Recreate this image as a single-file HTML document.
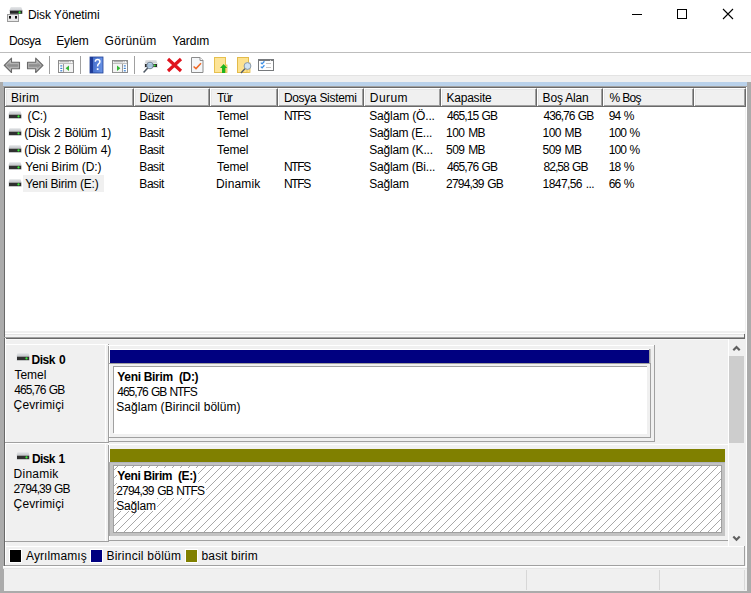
<!DOCTYPE html>
<html><head><meta charset="utf-8">
<style>
*{margin:0;padding:0;box-sizing:border-box}
html,body{width:751px;height:593px;overflow:hidden;background:#fff}
body{position:relative;font-family:"Liberation Sans",sans-serif;font-size:12px;color:#000}
.a{position:absolute}
.t{position:absolute;white-space:pre;line-height:14px;font-size:12px}
.b{font-weight:bold}
svg{position:absolute;display:block}
</style></head><body>
<svg style="left:6px;top:6px" width="18" height="18" viewBox="0 0 18 18">
  <defs><linearGradient id="tg" x1="0" y1="0" x2="0" y2="1"><stop offset="0" stop-color="#e6e8ea"/><stop offset="1" stop-color="#c4c7cb"/></linearGradient></defs>
  <path d="M4.8 1 L15.2 1 L16.8 5 L3.2 5 Z" fill="url(#tg)"/>
  <rect x="3.9" y="4.6" width="12.4" height="3.2" fill="#262626"/>
  <circle cx="13.6" cy="6.4" r="1.1" fill="#3cf03c"/>
  <rect x="1.5" y="8.5" width="11" height="7" fill="#e8e8e8" stroke="#9a9a9a"/>
  <rect x="3" y="10" width="2" height="2.6" fill="#111"/>
  <rect x="9" y="10" width="2" height="2.6" fill="#111"/>
</svg>
<div class="t" style="left:28.00px;top:7.84px;letter-spacing:-0.125px">Disk Yönetimi</div>
<div class="a" style="left:632px;top:14px;width:10px;height:1px;background:#000;"></div>
<div class="a" style="left:677px;top:9px;width:10px;height:10px;border:1px solid #000"></div>
<svg style="left:722px;top:8px" width="12" height="12" viewBox="0 0 12 12"><path d="M1 1 L11 11 M11 1 L1 11" stroke="#000" stroke-width="1.1"/></svg>
<div class="t" style="left:8.90px;top:33.84px;letter-spacing:-0.425px">Dosya</div>
<div class="t" style="left:56.30px;top:33.84px;letter-spacing:-0.200px">Eylem</div>
<div class="t" style="left:104.60px;top:33.84px;letter-spacing:0.267px">Görünüm</div>
<div class="t" style="left:172.40px;top:33.84px;letter-spacing:-0.180px">Yardım</div>
<div class="a" style="left:0px;top:52px;width:751px;height:1px;background:#bdbdbd;"></div>
<svg style="left:3px;top:57px" width="19" height="17" viewBox="0 0 19 17">
  <defs><linearGradient id="ag" x1="0" y1="0" x2="0" y2="1"><stop offset="0" stop-color="#cfcfcf"/><stop offset="0.5" stop-color="#8e8e8e"/><stop offset="1" stop-color="#c4c4c4"/></linearGradient></defs>
  <path d="M1.2 8.3 L8.5 1.2 L8.5 5.3 L16.5 5.3 L16.5 11.8 L8.5 11.8 L8.5 15.5 Z" fill="url(#ag)" stroke="#6a6a6a" stroke-width="1.1" stroke-linejoin="round"/>
  <path d="M3 8.3 L7.3 4.2 L7.3 6.4 L15.4 6.4 L15.4 10.7 L7.3 10.7 L7.3 12.5 Z" fill="none" stroke="#d8d8d8" stroke-width="0.6" stroke-opacity="0.7"/>
</svg>
<svg style="left:26px;top:57px" width="19" height="17" viewBox="0 0 19 17">
  <path d="M17 8.3 L9.7 1.2 L9.7 5.3 L1.5 5.3 L1.5 11.8 L9.7 11.8 L9.7 15.5 Z" fill="url(#ag)" stroke="#6a6a6a" stroke-width="1.1" stroke-linejoin="round"/>
  <path d="M15.2 8.3 L10.9 4.2 L10.9 6.4 L2.6 6.4 L2.6 10.7 L10.9 10.7 L10.9 12.5 Z" fill="none" stroke="#d8d8d8" stroke-width="0.6" stroke-opacity="0.7"/>
</svg>
<div class="a" style="left:49px;top:56px;width:1px;height:18px;background:#a0a0a0"></div>
<svg style="left:57px;top:59px" width="18" height="15" viewBox="0 0 18 15">
  <rect x="1.5" y="1.5" width="15" height="12" fill="#fff" stroke="#8c8c8c"/>
  <rect x="2.5" y="2.2" width="10" height="1.1" fill="#9a9a9a"/>
  <rect x="13.2" y="2.2" width="1" height="1.1" fill="#9a9a9a"/><rect x="15" y="2.2" width="1" height="1.1" fill="#9a9a9a"/>
  <rect x="2" y="4.2" width="14" height="0.9" fill="#b0b0b0"/>
  <rect x="7" y="5.1" width="9" height="8" fill="#f3f3f3"/>
  <line x1="6.5" y1="5" x2="6.5" y2="13" stroke="#9a9a9a"/>
  <rect x="3.3" y="6.3" width="2" height="1.2" fill="#3b7fd0"/><rect x="3.3" y="8.8" width="2" height="1.2" fill="#3b7fd0"/><rect x="3.3" y="11.2" width="2" height="1.2" fill="#3b7fd0"/>
  <path d="M12 6.6 L8.6 9.3 L12 12 Z" fill="#32b632"/>
</svg>
<div class="a" style="left:80px;top:56px;width:1px;height:18px;background:#a0a0a0"></div>
<svg style="left:89px;top:56px" width="15" height="18" viewBox="0 0 15 18">
  <defs><linearGradient id="hg" x1="0" y1="0" x2="1" y2="0"><stop offset="0" stop-color="#3d66c6"/><stop offset="1" stop-color="#6a94e6"/></linearGradient></defs>
  <rect x="1" y="1" width="13" height="16" fill="url(#hg)" stroke="#1f3f94" stroke-width="0.8"/>
  <rect x="1" y="1" width="3" height="16" fill="#1e3c98"/>
  <path d="M6.3 5.8 Q6.3 3.6 8.6 3.6 Q10.9 3.6 10.9 5.7 Q10.9 7 9.6 7.9 Q8.6 8.6 8.6 10.6" fill="none" stroke="#fff" stroke-width="1.5"/>
  <rect x="7.8" y="12.2" width="1.7" height="1.8" fill="#fff"/>
</svg>
<svg style="left:111px;top:59px" width="18" height="15" viewBox="0 0 18 15">
  <rect x="1.5" y="1.5" width="15" height="12" fill="#fff" stroke="#8c8c8c"/>
  <rect x="2.5" y="2.2" width="10" height="1.1" fill="#9a9a9a"/>
  <rect x="13.2" y="2.2" width="1" height="1.1" fill="#9a9a9a"/><rect x="15" y="2.2" width="1" height="1.1" fill="#9a9a9a"/>
  <rect x="2" y="4.2" width="14" height="0.9" fill="#b0b0b0"/>
  <rect x="2" y="5.1" width="9" height="8" fill="#f3f3f3"/>
  <line x1="11.5" y1="5" x2="11.5" y2="13" stroke="#9a9a9a"/>
  <rect x="12.8" y="6.3" width="2" height="1.2" fill="#3b7fd0"/><rect x="12.8" y="8.8" width="2" height="1.2" fill="#3b7fd0"/><rect x="12.8" y="11.2" width="2" height="1.2" fill="#3b7fd0"/>
  <path d="M6 6.6 L9.4 9.3 L6 12 Z" fill="#32b632"/>
</svg>
<div class="a" style="left:134px;top:56px;width:1px;height:18px;background:#a0a0a0"></div>
<svg style="left:142px;top:58px" width="18" height="17" viewBox="0 0 18 17">
  <path d="M3.6 2 L14.4 2 L15.2 6 L2.8 6 Z" fill="url(#dg)"/>
  <rect x="2" y="5" width="14" height="5" fill="#e6e8ea"/>
  <rect x="3" y="6" width="12" height="3" fill="#2c2c2c"/>
  <circle cx="12.6" cy="7.5" r="1.1" fill="#38ee38"/>
  <circle cx="8" cy="7.5" r="3.3" fill="#b4d2ec" fill-opacity="0.9" stroke="#6e7e8e" stroke-width="0.9"/>
  <line x1="5.7" y1="10" x2="1.6" y2="14.6" stroke="#4e5864" stroke-width="1.5"/>
</svg>
<svg style="left:166px;top:57px" width="17" height="16" viewBox="0 0 17 16">
  <path d="M2 2 L15 14 M15 2 L2 14" stroke="#e0141e" stroke-width="3.2"/>
</svg>
<svg style="left:190px;top:56px" width="15" height="18" viewBox="0 0 15 18">
  <path d="M1.5 1.5 L10 1.5 L13 4.5 L13 16.5 L1.5 16.5 Z" fill="#f4f6f8" stroke="#8c8c8c"/>
  <path d="M10 1.5 L10 4.5 L13 4.5" fill="#fff" stroke="#8c8c8c"/>
  <path d="M3.6 10.5 L6 12.6 L11 7.2" fill="none" stroke="#f06a28" stroke-width="1.5"/>
</svg>
<svg style="left:213px;top:56px" width="16" height="18" viewBox="0 0 16 18">
  <rect x="1.5" y="1.5" width="11" height="15" fill="#fde497" stroke="#e6c04e"/>
  <rect x="12.5" y="9" width="1.5" height="7.5" fill="#fde497" stroke="#e6c04e" stroke-width="0.8"/>
  <path d="M10.6 8 L14.2 12 L12.2 12 L12.2 17 L9 17 L9 12 L7 12 Z" fill="#1fb41f"/>
</svg>
<svg style="left:236px;top:56px" width="17" height="18" viewBox="0 0 17 18">
  <rect x="1.5" y="1.5" width="11" height="15" fill="#fde28e" stroke="#e3bb4a"/>
  <rect x="11" y="7" width="3" height="9.5" fill="#fde28e" stroke="#e3bb4a" stroke-width="0.8"/>
  <circle cx="11.5" cy="10" r="3.4" fill="#cfe3f3" stroke="#8a9aaa"/>
  <line x1="9" y1="12.6" x2="5" y2="17" stroke="#505a66" stroke-width="1.4"/>
</svg>
<svg style="left:257px;top:58px" width="18" height="14" viewBox="0 0 18 14">
  <rect x="1.5" y="1.5" width="15" height="11" fill="#fff" stroke="#777a7d"/>
  <rect x="1" y="1" width="16" height="2" fill="#777a7d"/>
  <rect x="13" y="2" width="1" height="1" fill="#d0d0d0"/>
  <path d="M3.8 4.6 L5.1 5.9 L7.4 3.3" fill="none" stroke="#3a8ee6" stroke-width="1.3"/>
  <path d="M3.8 8.6 L5.1 9.9 L7.4 7.3" fill="none" stroke="#3a8ee6" stroke-width="1.3"/>
  <rect x="9" y="5" width="5" height="1" fill="#c4c4c4"/><rect x="9" y="9" width="5" height="1" fill="#c4c4c4"/>
</svg>

<div class="a" style="left:0px;top:75px;width:751px;height:1px;background:#e3e3e3;"></div>
<div class="a" style="left:0px;top:76px;width:751px;height:517px;background:#f0f0f0;"></div>
<div class="a" style="left:0px;top:82px;width:4px;height:511px;background:#ababab;"></div>
<div class="a" style="left:747px;top:82px;width:4px;height:511px;background:#ababab;"></div>
<div class="a" style="left:0px;top:591px;width:751px;height:2px;background:#ababab;"></div>
<div class="a" style="left:3px;top:82px;width:744px;height:4px;background:#b9d1ea;"></div>
<div class="a" style="left:3px;top:86px;width:744px;height:1px;background:#a0a0a0;"></div>
<div class="a" style="left:4px;top:87px;width:742px;height:1px;background:#696969;"></div>
<div class="a" style="left:4px;top:87px;width:1px;height:479px;background:#696969;"></div>
<div class="a" style="left:5px;top:88px;width:740px;height:243px;background:#fff;"></div>
<div class="a" style="left:746px;top:87px;width:1px;height:480px;background:#fff;"></div>
<div class="a" style="left:5px;top:88px;width:129px;height:19px;background:#f0f0f0;border-left:1px solid #fff;border-top:1px solid #fff;border-right:1px solid #696969;border-bottom:1px solid #696969;box-shadow:inset -1px -1px 0 #a0a0a0,inset 1px 1px 0 #e6e6e6"></div>
<div class="t" style="left:10.90px;top:90.84px;letter-spacing:0.175px">Birim</div>
<div class="a" style="left:134px;top:88px;width:76px;height:19px;background:#f0f0f0;border-left:1px solid #fff;border-top:1px solid #fff;border-right:1px solid #696969;border-bottom:1px solid #696969;box-shadow:inset -1px -1px 0 #a0a0a0,inset 1px 1px 0 #e6e6e6"></div>
<div class="t" style="left:139.60px;top:90.84px;letter-spacing:-0.325px">Düzen</div>
<div class="a" style="left:210px;top:88px;width:68px;height:19px;background:#f0f0f0;border-left:1px solid #fff;border-top:1px solid #fff;border-right:1px solid #696969;border-bottom:1px solid #696969;box-shadow:inset -1px -1px 0 #a0a0a0,inset 1px 1px 0 #e6e6e6"></div>
<div class="t" style="left:217.00px;top:90.84px;letter-spacing:-1.100px">Tür</div>
<div class="a" style="left:278px;top:88px;width:86px;height:19px;background:#f0f0f0;border-left:1px solid #fff;border-top:1px solid #fff;border-right:1px solid #696969;border-bottom:1px solid #696969;box-shadow:inset -1px -1px 0 #a0a0a0,inset 1px 1px 0 #e6e6e6"></div>
<div class="t" style="left:283.90px;top:90.84px;letter-spacing:-0.308px">Dosya Sistemi</div>
<div class="a" style="left:364px;top:88px;width:77px;height:19px;background:#f0f0f0;border-left:1px solid #fff;border-top:1px solid #fff;border-right:1px solid #696969;border-bottom:1px solid #696969;box-shadow:inset -1px -1px 0 #a0a0a0,inset 1px 1px 0 #e6e6e6"></div>
<div class="t" style="left:369.80px;top:90.84px;letter-spacing:0.450px">Durum</div>
<div class="a" style="left:441px;top:88px;width:96px;height:19px;background:#f0f0f0;border-left:1px solid #fff;border-top:1px solid #fff;border-right:1px solid #696969;border-bottom:1px solid #696969;box-shadow:inset -1px -1px 0 #a0a0a0,inset 1px 1px 0 #e6e6e6"></div>
<div class="t" style="left:446.40px;top:90.84px;letter-spacing:-0.200px">Kapasite</div>
<div class="a" style="left:537px;top:88px;width:66px;height:19px;background:#f0f0f0;border-left:1px solid #fff;border-top:1px solid #fff;border-right:1px solid #696969;border-bottom:1px solid #696969;box-shadow:inset -1px -1px 0 #a0a0a0,inset 1px 1px 0 #e6e6e6"></div>
<div class="t" style="left:542.60px;top:90.84px;letter-spacing:-0.171px">Boş Alan</div>
<div class="a" style="left:603px;top:88px;width:91px;height:19px;background:#f0f0f0;border-left:1px solid #fff;border-top:1px solid #fff;border-right:1px solid #696969;border-bottom:1px solid #696969;box-shadow:inset -1px -1px 0 #a0a0a0,inset 1px 1px 0 #e6e6e6"></div>
<div class="t" style="left:609.60px;top:90.84px;letter-spacing:-0.700px">% Boş</div>
<div class="a" style="left:694px;top:88px;width:52px;height:19px;background:#f0f0f0;border-left:1px solid #fff;border-top:1px solid #fff;border-right:1px solid #696969;border-bottom:1px solid #696969;box-shadow:inset -1px -1px 0 #a0a0a0,inset 1px 1px 0 #e6e6e6"></div>
<div class="a" style="left:5px;top:106px;width:741px;height:1px;background:#696969;"></div>
<div class="a" style="left:23px;top:175px;width:81px;height:17px;background:#f0f0f0;"></div>
<svg style="left:7px;top:111px" width="16" height="10" viewBox="0 0 16 10"><defs><linearGradient id="dg" x1="0" y1="0" x2="0" y2="1"><stop offset="0" stop-color="#e2e4e6"/><stop offset="1" stop-color="#c2c5c9"/></linearGradient></defs><path d="M2.5 0.2 L13.5 0.2 L14.5 3.5 L1.5 3.5 Z" fill="url(#dg)"/><rect x="1" y="3.2" width="14" height="4.6" fill="#e8eaec"/><rect x="2" y="3.6" width="12.2" height="3.6" fill="#303030"/><circle cx="11.5" cy="5.4" r="1.1" fill="#38ee38"/></svg>
<div class="t" style="left:24.50px;top:108.84px;letter-spacing:-0.225px"> (C:)</div>
<div class="t" style="left:139.30px;top:108.84px;letter-spacing:-0.425px">Basit</div>
<div class="t" style="left:217.00px;top:108.84px;letter-spacing:-0.125px">Temel</div>
<div class="t" style="left:283.90px;top:108.84px;letter-spacing:-1.333px">NTFS</div>
<div class="t" style="left:369.20px;top:108.84px;letter-spacing:-0.145px">Sağlam (Ö...</div>
<div class="t" style="left:447.10px;top:108.84px;letter-spacing:-0.938px;word-spacing:1.0px">465,15 GB</div>
<div class="t" style="left:543.60px;top:108.84px;letter-spacing:-0.975px;word-spacing:1.0px">436,76 GB</div>
<div class="t" style="left:608.70px;top:108.84px;letter-spacing:-0.867px;word-spacing:1.0px">94 %</div>
<svg style="left:7px;top:128px" width="16" height="10" viewBox="0 0 16 10"><defs><linearGradient id="dg" x1="0" y1="0" x2="0" y2="1"><stop offset="0" stop-color="#e2e4e6"/><stop offset="1" stop-color="#c2c5c9"/></linearGradient></defs><path d="M2.5 0.2 L13.5 0.2 L14.5 3.5 L1.5 3.5 Z" fill="url(#dg)"/><rect x="1" y="3.2" width="14" height="4.6" fill="#e8eaec"/><rect x="2" y="3.6" width="12.2" height="3.6" fill="#303030"/><circle cx="11.5" cy="5.4" r="1.1" fill="#38ee38"/></svg>
<div class="t" style="left:24.30px;top:125.84px;letter-spacing:-0.320px;word-spacing:1.0px">(Disk 2 Bölüm 1)</div>
<div class="t" style="left:139.30px;top:125.84px;letter-spacing:-0.425px">Basit</div>
<div class="t" style="left:217.00px;top:125.84px;letter-spacing:-0.125px">Temel</div>
<div class="t" style="left:369.20px;top:125.84px;letter-spacing:-0.264px">Sağlam (E...</div>
<div class="t" style="left:446.10px;top:125.84px;letter-spacing:-0.580px;word-spacing:1.0px">100 MB</div>
<div class="t" style="left:542.60px;top:125.84px;letter-spacing:-0.600px;word-spacing:1.0px">100 MB</div>
<div class="t" style="left:608.70px;top:125.84px;letter-spacing:-0.875px;word-spacing:1.0px">100 %</div>
<svg style="left:7px;top:145px" width="16" height="10" viewBox="0 0 16 10"><defs><linearGradient id="dg" x1="0" y1="0" x2="0" y2="1"><stop offset="0" stop-color="#e2e4e6"/><stop offset="1" stop-color="#c2c5c9"/></linearGradient></defs><path d="M2.5 0.2 L13.5 0.2 L14.5 3.5 L1.5 3.5 Z" fill="url(#dg)"/><rect x="1" y="3.2" width="14" height="4.6" fill="#e8eaec"/><rect x="2" y="3.6" width="12.2" height="3.6" fill="#303030"/><circle cx="11.5" cy="5.4" r="1.1" fill="#38ee38"/></svg>
<div class="t" style="left:24.30px;top:142.84px;letter-spacing:-0.320px;word-spacing:1.0px">(Disk 2 Bölüm 4)</div>
<div class="t" style="left:139.30px;top:142.84px;letter-spacing:-0.425px">Basit</div>
<div class="t" style="left:217.00px;top:142.84px;letter-spacing:-0.125px">Temel</div>
<div class="t" style="left:369.20px;top:142.84px;letter-spacing:-0.200px">Sağlam (K...</div>
<div class="t" style="left:446.10px;top:142.84px;letter-spacing:-0.580px;word-spacing:1.0px">509 MB</div>
<div class="t" style="left:542.60px;top:142.84px;letter-spacing:-0.600px;word-spacing:1.0px">509 MB</div>
<div class="t" style="left:608.70px;top:142.84px;letter-spacing:-0.875px;word-spacing:1.0px">100 %</div>
<svg style="left:7px;top:162px" width="16" height="10" viewBox="0 0 16 10"><defs><linearGradient id="dg" x1="0" y1="0" x2="0" y2="1"><stop offset="0" stop-color="#e2e4e6"/><stop offset="1" stop-color="#c2c5c9"/></linearGradient></defs><path d="M2.5 0.2 L13.5 0.2 L14.5 3.5 L1.5 3.5 Z" fill="url(#dg)"/><rect x="1" y="3.2" width="14" height="4.6" fill="#e8eaec"/><rect x="2" y="3.6" width="12.2" height="3.6" fill="#303030"/><circle cx="11.5" cy="5.4" r="1.1" fill="#38ee38"/></svg>
<div class="t" style="left:25.30px;top:159.84px;letter-spacing:-0.043px">Yeni Birim (D:)</div>
<div class="t" style="left:139.30px;top:159.84px;letter-spacing:-0.425px">Basit</div>
<div class="t" style="left:217.00px;top:159.84px;letter-spacing:-0.125px">Temel</div>
<div class="t" style="left:283.90px;top:159.84px;letter-spacing:-1.333px">NTFS</div>
<div class="t" style="left:369.20px;top:159.84px;letter-spacing:-0.208px">Sağlam (Bi...</div>
<div class="t" style="left:447.10px;top:159.84px;letter-spacing:-0.938px;word-spacing:1.0px">465,76 GB</div>
<div class="t" style="left:543.60px;top:159.84px;letter-spacing:-0.986px;word-spacing:1.0px">82,58 GB</div>
<div class="t" style="left:608.70px;top:159.84px;letter-spacing:-0.867px;word-spacing:1.0px">18 %</div>
<svg style="left:7px;top:179px" width="16" height="10" viewBox="0 0 16 10"><defs><linearGradient id="dg" x1="0" y1="0" x2="0" y2="1"><stop offset="0" stop-color="#e2e4e6"/><stop offset="1" stop-color="#c2c5c9"/></linearGradient></defs><path d="M2.5 0.2 L13.5 0.2 L14.5 3.5 L1.5 3.5 Z" fill="url(#dg)"/><rect x="1" y="3.2" width="14" height="4.6" fill="#e8eaec"/><rect x="2" y="3.6" width="12.2" height="3.6" fill="#303030"/><circle cx="11.5" cy="5.4" r="1.1" fill="#38ee38"/></svg>
<div class="t" style="left:25.30px;top:176.84px;letter-spacing:-0.200px">Yeni Birim (E:)</div>
<div class="t" style="left:139.30px;top:176.84px;letter-spacing:-0.425px">Basit</div>
<div class="t" style="left:216.00px;top:176.84px;letter-spacing:0.167px">Dinamik</div>
<div class="t" style="left:283.90px;top:176.84px;letter-spacing:-1.333px">NTFS</div>
<div class="t" style="left:369.20px;top:176.84px;letter-spacing:-0.200px">Sağlam</div>
<div class="t" style="left:446.10px;top:176.84px;letter-spacing:-0.822px;word-spacing:1.0px">2794,39 GB</div>
<div class="t" style="left:542.60px;top:176.84px;letter-spacing:-0.580px;word-spacing:1.0px">1847,56 ...</div>
<div class="t" style="left:608.70px;top:176.84px;letter-spacing:-0.867px;word-spacing:1.0px">66 %</div>
<div class="a" style="left:5px;top:331px;width:741px;height:7px;background:#f0f0f0;"></div>
<div class="a" style="left:5px;top:333px;width:739px;height:1px;background:#fff;"></div>
<div class="a" style="left:5px;top:334px;width:739px;height:1px;background:#e3e3e3;"></div>
<div class="a" style="left:5px;top:335px;width:739px;height:2px;background:#f4f4f4;"></div>
<div class="a" style="left:4px;top:337px;width:741px;height:1px;background:#a0a0a0;"></div>
<div class="a" style="left:4px;top:338px;width:741px;height:1px;background:#696969;"></div>
<div class="a" style="left:5px;top:339px;width:740px;height:1px;background:#f8f8f8;"></div>
<div class="a" style="left:744px;top:334px;width:1px;height:4px;background:#696969;"></div>
<div class="a" style="left:5px;top:338px;width:1px;height:228px;background:#fff;"></div>
<div class="a" style="left:6px;top:344px;width:102px;height:1px;background:#fff;"></div>
<div class="a" style="left:105px;top:344px;width:1px;height:98px;background:#fff;"></div>
<div class="a" style="left:5px;top:442px;width:104px;height:1px;background:#a0a0a0;"></div>
<div class="a" style="left:108px;top:344px;width:1px;height:99px;background:#a0a0a0;"></div>
<div class="a" style="left:108px;top:345px;width:1px;height:1px;background:#fff;"></div>
<svg style="left:15px;top:353px" width="16" height="10" viewBox="0 0 16 10"><path d="M2.5 0.2 L13.5 0.2 L14.5 3.5 L1.5 3.5 Z" fill="url(#dg)"/><rect x="1" y="3.2" width="14" height="4.6" fill="#e8eaec"/><rect x="2" y="3.6" width="12.2" height="3.6" fill="#303030"/><circle cx="11.5" cy="5.4" r="1.1" fill="#38ee38"/></svg>
<div class="t b" style="left:31.40px;top:352.84px;letter-spacing:-0.400px;word-spacing:1.0px">Disk 0</div>
<div class="t" style="left:14.50px;top:367.84px;letter-spacing:-0.025px">Temel</div>
<div class="t" style="left:14.20px;top:382.84px;letter-spacing:-0.912px;word-spacing:1.0px">465,76 GB</div>
<div class="t" style="left:13.60px;top:397.84px;letter-spacing:0.125px">Çevrimiçi</div>
<div class="a" style="left:109px;top:345px;width:545px;height:1px;background:#fff;"></div>
<div class="a" style="left:109px;top:345px;width:1px;height:97px;background:#fff;"></div>
<div class="a" style="left:654px;top:345px;width:1px;height:97px;background:#a0a0a0;"></div>
<div class="a" style="left:109px;top:441px;width:546px;height:1px;background:#a0a0a0;"></div>
<div class="a" style="left:109px;top:349px;width:540px;height:1px;background:#fff;"></div>
<div class="a" style="left:110px;top:350px;width:539px;height:13px;background:#000080;"></div>
<div class="a" style="left:649px;top:349px;width:1px;height:15px;background:#a0a0a0;"></div>
<div class="a" style="left:650px;top:349px;width:1px;height:15px;background:#c8c8c8;"></div>
<div class="a" style="left:109px;top:363px;width:542px;height:1px;background:#a0a0a0;"></div>
<div class="a" style="left:113px;top:366px;width:534px;height:1px;background:#a0a0a0;"></div>
<div class="a" style="left:113px;top:366px;width:1px;height:67px;background:#a0a0a0;"></div>
<div class="a" style="left:650px;top:364px;width:1px;height:74px;background:#a0a0a0;"></div>
<div class="a" style="left:109px;top:437px;width:542px;height:1px;background:#a0a0a0;"></div>
<div class="a" style="left:114px;top:367px;width:533px;height:67px;background:#fff;"></div>
<div class="t b" style="left:117.30px;top:369.84px;letter-spacing:-0.313px">Yeni Birim  (D:)</div>
<div class="t" style="left:117.30px;top:384.84px;letter-spacing:-1.054px;word-spacing:1.0px">465,76 GB NTFS</div>
<div class="t" style="left:116.30px;top:399.84px;letter-spacing:0.041px">Sağlam (Birincil bölüm)</div>
<div class="a" style="left:6px;top:443px;width:102px;height:1px;background:#fff;"></div>
<div class="a" style="left:105px;top:443px;width:1px;height:98px;background:#fff;"></div>
<div class="a" style="left:5px;top:541px;width:104px;height:1px;background:#a0a0a0;"></div>
<div class="a" style="left:108px;top:443px;width:1px;height:99px;background:#a0a0a0;"></div>
<div class="a" style="left:108px;top:443px;width:1px;height:2px;background:#fff;"></div>
<svg style="left:15px;top:452px" width="16" height="10" viewBox="0 0 16 10"><path d="M2.5 0.2 L13.5 0.2 L14.5 3.5 L1.5 3.5 Z" fill="url(#dg)"/><rect x="1" y="3.2" width="14" height="4.6" fill="#e8eaec"/><rect x="2" y="3.6" width="12.2" height="3.6" fill="#303030"/><circle cx="11.5" cy="5.4" r="1.1" fill="#38ee38"/></svg>
<div class="t b" style="left:32.00px;top:451.84px;letter-spacing:-0.620px;word-spacing:1.0px">Disk 1</div>
<div class="t" style="left:13.60px;top:466.84px;letter-spacing:0.233px">Dinamik</div>
<div class="t" style="left:13.60px;top:481.84px;letter-spacing:-0.900px;word-spacing:1.0px">2794,39 GB</div>
<div class="t" style="left:13.60px;top:496.84px;letter-spacing:0.125px">Çevrimiçi</div>
<div class="a" style="left:109px;top:444px;width:619px;height:1px;background:#fff;"></div>
<div class="a" style="left:109px;top:444px;width:1px;height:97px;background:#fff;"></div>
<div class="a" style="left:728px;top:444px;width:1px;height:97px;background:#a0a0a0;"></div>
<div class="a" style="left:109px;top:540px;width:620px;height:1px;background:#a0a0a0;"></div>
<div class="a" style="left:110px;top:449px;width:615px;height:13px;background:#808000;"></div>
<div class="a" style="left:109px;top:462px;width:616px;height:74px;background:#c3c3c3;border-top:1px solid #b0b4bc;border-left:1px solid #a8a8a8"></div>
<div class="a" style="left:113px;top:465px;width:609px;height:68px;border:1px solid #a0a0a0;background:#fff"></div>
<svg style="left:114px;top:466px" width="607" height="66"><defs><pattern id="h" x="4" y="0" width="8" height="8" patternUnits="userSpaceOnUse"><rect x="0" y="7" width="1" height="1" fill="#a8a8a8"/><rect x="1" y="6" width="1" height="1" fill="#a8a8a8"/><rect x="2" y="5" width="1" height="1" fill="#a8a8a8"/><rect x="3" y="4" width="1" height="1" fill="#a8a8a8"/><rect x="4" y="3" width="1" height="1" fill="#a8a8a8"/><rect x="5" y="2" width="1" height="1" fill="#a8a8a8"/><rect x="6" y="1" width="1" height="1" fill="#a8a8a8"/><rect x="7" y="0" width="1" height="1" fill="#a8a8a8"/></pattern></defs><rect width="100%" height="100%" fill="url(#h)" shape-rendering="crispEdges"/></svg>
<div class="a" style="left:117px;top:468px;width:81px;height:15px;background:#fff;"></div>
<div class="t b" style="left:117.30px;top:468.84px;letter-spacing:-0.387px">Yeni Birim  (E:)</div>
<div class="a" style="left:117px;top:483px;width:89px;height:15px;background:#fff;"></div>
<div class="t" style="left:116.30px;top:483.84px;letter-spacing:-0.857px;word-spacing:1.0px">2794,39 GB NTFS</div>
<div class="a" style="left:117px;top:498px;width:40px;height:13px;background:#fff;"></div>
<div class="t" style="left:116.30px;top:498.84px;letter-spacing:-0.180px">Sağlam</div>
<div class="a" style="left:728px;top:339px;width:1px;height:207px;background:#fff;"></div>
<div class="a" style="left:729px;top:339px;width:16px;height:207px;background:#f0f0f0;"></div>
<div class="a" style="left:729px;top:356px;width:15px;height:87px;background:#cdcdcd;"></div>
<svg style="left:731px;top:343px" width="12" height="10" viewBox="0 0 12 10"><path d="M2.3 7.2 L5.5 4 L8.7 7.2" fill="none" stroke="#606060" stroke-width="2.2"/></svg>
<svg style="left:731px;top:533px" width="12" height="10" viewBox="0 0 12 10"><path d="M2.3 3.5 L5.5 6.7 L8.7 3.5" fill="none" stroke="#606060" stroke-width="2.2"/></svg>
<div class="a" style="left:5px;top:546px;width:740px;height:1px;background:#fff;"></div>
<div class="a" style="left:5px;top:565px;width:740px;height:1px;background:#a0a0a0;"></div>
<div class="a" style="left:744px;top:546px;width:1px;height:20px;background:#a0a0a0;"></div>
<div class="a" style="left:9px;top:549px;width:13px;height:14px;background:#fff;"></div>
<div class="a" style="left:10px;top:550px;width:11px;height:12px;background:#000;"></div>
<div class="a" style="left:90px;top:549px;width:13px;height:14px;background:#fff;"></div>
<div class="a" style="left:91px;top:550px;width:11px;height:12px;background:#000080;"></div>
<div class="a" style="left:185px;top:549px;width:13px;height:14px;background:#fff;"></div>
<div class="a" style="left:186px;top:550px;width:11px;height:12px;background:#808000;"></div>
<div class="t" style="left:26.00px;top:548.84px;letter-spacing:0.111px">Ayrılmamış</div>
<div class="t" style="left:106.40px;top:548.84px;letter-spacing:0.254px">Birincil bölüm</div>
<div class="t" style="left:201.50px;top:548.84px;letter-spacing:0.150px">basit birim</div>
<div class="a" style="left:3px;top:566px;width:744px;height:1px;background:#fff;"></div>
<div class="a" style="left:3px;top:567px;width:744px;height:1px;background:#f9f9f9;"></div>
<div class="a" style="left:3px;top:568px;width:744px;height:1px;background:#e6e6e6;"></div>
<div class="a" style="left:526px;top:570px;width:1px;height:20px;background:#d7d7d7;"></div>
<div class="a" style="left:659px;top:570px;width:1px;height:20px;background:#d7d7d7;"></div>
<div class="a" style="left:744px;top:570px;width:1px;height:20px;background:#d7d7d7;"></div>
</body></html>
